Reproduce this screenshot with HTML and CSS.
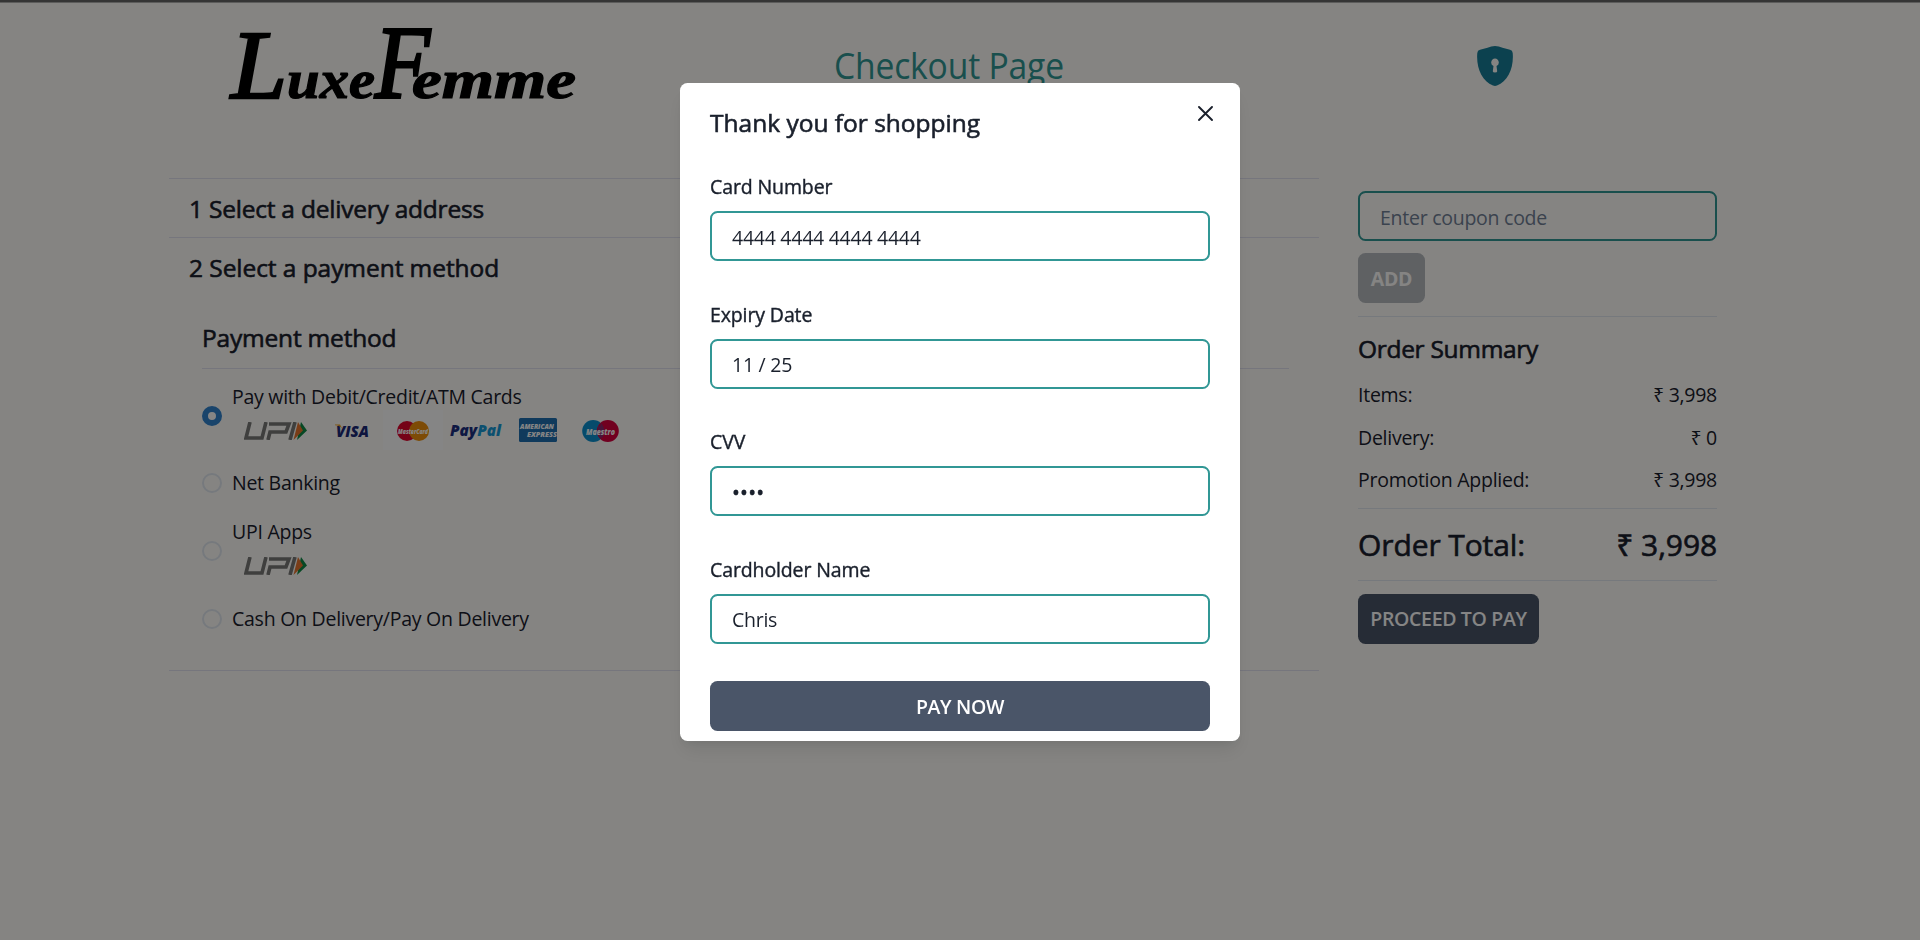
FILE: index.html
```html
<!DOCTYPE html>
<html lang="en">
<head>
<meta charset="utf-8">
<title>Checkout</title>
<link rel="stylesheet" href="styles.css">
</head>
<body>
<svg class="defs" width="0" height="0">
  <symbol id="upi" viewBox="0 0 63 18">
    <path d="M6 0 2 16H18L22 0M24 18 26 10H42L45 2H25M51 0 46 18" fill="none" stroke="#7a7a78" stroke-width="3.6"/>
    <path d="M57 0 63 8.500 53 18Z" fill="#0e8a45"/>
    <path d="M54 0 59 8.500 49.500 18Z" fill="#e8742c"/>
  </symbol>
</svg>
<div class="page">
  <header class="header">
    <svg class="logo" viewBox="0 0 360 80">
      <text y="75"><tspan class="logo-l" x="3" textLength="56" lengthAdjust="spacingAndGlyphs">L</tspan><tspan class="logo-low" x="59" textLength="88" lengthAdjust="spacingAndGlyphs">uxe</tspan><tspan class="logo-f" x="147" textLength="55" lengthAdjust="spacingAndGlyphs">F</tspan><tspan class="logo-low" x="184" textLength="164" lengthAdjust="spacingAndGlyphs">emme</tspan></text>
    </svg>
    <h1 class="title"><span>Checkout Page</span></h1>
    <svg class="shield" viewBox="0 0 36 40">
      <path fill="#187e98" fill-rule="evenodd" d="M18 0C23 .3 28 2.800 33 3.800Q35.500 4.300 35.700 7C37 22 31 35 20 39.500Q18 40.300 16 39.500C5 35 -1 22 .3 7Q.5 4.300 3 3.800C8 2.800 13 .3 18 0ZM18 12.500A4 4 0 0 0 16.500 20.100L15.800 25.200Q15.800 26.500 18 26.500T20.200 25.200L19.500 20.100A4 4 0 0 0 18 12.500Z"/>
    </svg>
  </header>
  <main class="main">
    <section class="steps">
      <h2 class="step first">1 Select a delivery address</h2>
      <h2 class="step">2 Select a payment method</h2>
      <div class="payment">
        <h2 class="payment-title">Payment method</h2>
        <div class="options">
          <label class="option">
            <i class="radio checked"></i>
            <div>
              <span class="t">Pay with Debit/Credit/ATM Cards</span>
              <div class="brands">
                <svg class="upi"><use href="#upi"/></svg>
                <svg class="visa" viewBox="0 0 34 13"><text x="1" y="12.500" textLength="33" lengthAdjust="spacingAndGlyphs">VISA</text><path d="M0 .5H5L7.500 5Q5 1.500 0 1.200Z" fill="#f0a020"/></svg>
                <svg class="mc" viewBox="0 0 32 20"><rect x="-14" y="-11" width="60" height="40" fill="#fff"/><circle cx="10" cy="10" r="10" fill="#e0062d"/><circle cx="22" cy="10" r="10" fill="#f0900c"/><text x="1" y="12.500" textLength="30" lengthAdjust="spacingAndGlyphs">MasterCard</text></svg>
                <svg class="paypal" viewBox="0 0 52 18"><text x="0" y="13" textLength="51" lengthAdjust="spacingAndGlyphs"><tspan fill="#1c2f80">Pay</tspan><tspan fill="#189ad6">Pal</tspan></text></svg>
                <svg class="amex" viewBox="0 0 38 24"><rect width="38" height="24" rx="1.500" fill="#2070b0"/><text x="1" y="11.200" textLength="34" lengthAdjust="spacingAndGlyphs">AMERICAN</text><text x="8" y="18.600" textLength="30" lengthAdjust="spacingAndGlyphs">EXPRESS</text></svg>
                <svg class="maestro" viewBox="0 0 37 22"><circle cx="11.200" cy="11" r="11" fill="#0d91cf"/><circle cx="25.800" cy="11" r="11" fill="#d8003f"/><path d="M18.500 2.700V6H16V10H15V14H17V17H18.500V19.300Q22.200 16 22.200 11T18.500 2.700Z" fill="#8a2a70"/><text x="4" y="14.500" textLength="29" lengthAdjust="spacingAndGlyphs">Maestro</text></svg>
              </div>
            </div>
          </label>
          <label class="option"><i class="radio"></i><span class="t">Net Banking</span></label>
          <label class="option">
            <i class="radio"></i>
            <div>
              <span class="t">UPI Apps</span>
              <div class="brands"><svg class="upi"><use href="#upi"/></svg></div>
            </div>
          </label>
          <label class="option"><i class="radio"></i><span class="t">Cash On Delivery/Pay On Delivery</span></label>
        </div>
      </div>
    </section>
    <aside class="summary">
      <input class="field coupon" type="text" placeholder="Enter coupon code">
      <button class="btn add" disabled>ADD</button>
      <h2 class="summary-title">Order Summary</h2>
      <div class="line"><span>Items:</span><span>₹ 3,998</span></div>
      <div class="line"><span>Delivery:</span><span>₹ 0</span></div>
      <div class="line"><span>Promotion Applied:</span><span>₹ 3,998</span></div>
      <div class="total"><span>Order Total:</span><span>₹ 3,998</span></div>
      <button class="btn proceed">PROCEED TO PAY</button>
    </aside>
  </main>
</div>
<div class="overlay">
  <div class="modal">
    <h2 class="modal-title">Thank you for shopping</h2>
    <svg class="close" viewBox="0 0 15 15"><path d="M1 1 14 14M14 1 1 14" stroke="#1a202c" stroke-width="1.900" stroke-linecap="round"/></svg>
    <form class="form">
      <div class="group"><label>Card Number</label><input class="field" type="text" value="4444 4444 4444 4444"></div>
      <div class="group"><label>Expiry Date</label><input class="field" type="text" value="11 / 25"></div>
      <div class="group"><label>CVV</label><input class="field cvv" type="text" value="••••"></div>
      <div class="group"><label>Cardholder Name</label><input class="field" type="text" value="Chris"></div>
      <button class="btn pay" type="button">PAY NOW</button>
    </form>
  </div>
</div>
</body>
</html>
```
FILE: styles.css
```css
* { box-sizing: border-box; }
body, h1, h2 { margin: 0; }
body {
  background: #fffefa;
  color: #1a202c;
  font-family: "Open Sans", "Noto Sans", sans-serif;
  font-size: 19.500px;
  letter-spacing: -.26px;
  line-height: 30px;
  overflow: hidden;
}
h2 { font-size: 24.500px; font-weight: 400; line-height: 37.500px; letter-spacing: -.06px; -webkit-text-stroke: .6px; }
.defs { position: absolute; }

.page { height: 940px; border-top: 2px solid #666; box-shadow: inset 0 1px #b0b0ae; }
.header { display: flex; height: 176px; padding-left: 228px; }
.logo { width: 360px; height: 80px; margin-top: 21px; overflow: visible; }
.logo text { font-family: "Liberation Serif", serif; font-style: italic; font-weight: 700; letter-spacing: 0; stroke: #000; }
.logo-l { font-size: 98px; font-weight: 400; stroke-width: 2.500px; }
.logo-f { font-size: 103px; font-weight: 400; stroke-width: 3px; }
.logo-low { font-size: 54px; stroke-width: 1.200px; }
.title { width: 232px; margin: 36px 0 0 246px; color: #319795; font-size: 36px; font-weight: 400; line-height: 56px; letter-spacing: -.2px; white-space: nowrap; }
.title span { display: inline-block; transform: scaleX(.935); transform-origin: left; }
.shield { width: 36px; height: 40px; margin: 44px 0 0 411px; }

.main { display: flex; gap: 39px; padding-left: 169px; }
.steps { width: 1150px; height: 493px; border-bottom: 1px solid #e2e2f0; }
.step { height: 59px; padding: 10.500px 20px; border-top: 1px solid #e2e2f0; }
.step.first { letter-spacing: -.22px; }
.payment { padding: 22.500px 30px 0 33px; }
.payment-title { height: 50.500px; border-bottom: 1px solid #e2e2f0; letter-spacing: -.2px; }
.options { display: flex; flex-direction: column; gap: 18.800px; padding-top: 12.500px; }
.option { display: flex; align-items: center; gap: 10px; }
.t { display: block; }
.radio { width: 20px; height: 20px; border: 2px solid #e2e8f0; border-radius: 50%; }
.radio.checked { border: 6px solid #3182ce; background: #fff; }
.brands { display: flex; align-items: center; height: 38px; padding-left: 12px; }
.upi { width: 63px; height: 18px; }
.brands svg { overflow: visible; }
.brands text { font-weight: 800; font-style: italic; letter-spacing: 0; }
.visa { width: 34px; height: 13px; margin-left: 28px; fill: #1b2a78; font-size: 16px; }
.mc { width: 32px; height: 20px; margin-left: 28px; fill: #fff; font-size: 7px; }
.paypal { width: 52px; height: 18px; margin: 3px 0 0 21px; font-size: 16px; }
.amex { width: 38px; height: 24px; margin: -2px 0 0 17px; fill: #fff; font-size: 7px; }
.maestro { width: 37px; height: 22px; margin-left: 25px; fill: #fff; font-size: 9px; }

.field { display: block; width: 100%; height: 50px; padding: 2px 20px 0; border: 2px solid #319795; border-radius: 7.500px; background: transparent; color: #1a202c; font: inherit; letter-spacing: inherit; }
.coupon::placeholder { color: #718096; opacity: 1; }
.cvv { font-size: 21px; letter-spacing: .2px; -webkit-text-stroke: .4px; }
.btn { display: block; height: 50px; padding: 1px 0 0; border: 0; border-radius: 7.500px; background: #4a5568; color: #fff; font: inherit; font-weight: 600; letter-spacing: -.34px; }
.summary { width: 359px; padding-top: 13px; }
.add { width: 67px; margin-top: 12px; opacity: .4; font-weight: 700; }
.summary-title { margin-top: 13px; padding-top: 13px; border-top: 1px solid #e2e8f0; letter-spacing: -.3px; }
.line { display: flex; justify-content: space-between; padding-top: 12.500px; }
.total { display: flex; justify-content: space-between; margin-top: 12.500px; padding: 13px 0 12px; border: solid #e2e8f0; border-width: 1px 0; font-size: 30px; line-height: 46px; letter-spacing: -.1px; -webkit-text-stroke: .6px; }
.proceed { width: 181px; margin-top: 13px; }

.overlay { position: fixed; inset: 0; padding-top: 83px; background: rgba(0, 0, 0, .48); }
.modal { position: relative; width: 560px; height: 658px; margin: 0 auto; padding: 21px 30px 0; border-radius: 7.500px; background: #fff; box-shadow: 0 12px 19px -4px rgba(0, 0, 0, .1), 0 5px 8px -2px rgba(0, 0, 0, .05); }
.modal-title { letter-spacing: 0; }
.close { position: absolute; top: 23px; right: 27px; width: 15px; height: 15px; }
.form { padding-top: 29.500px; }
.group { padding-bottom: 37.500px; }
.group label { display: block; height: 40px; padding-top: 1px; letter-spacing: -.12px; -webkit-text-stroke: .4px; }
.pay { width: 100%; }
```
